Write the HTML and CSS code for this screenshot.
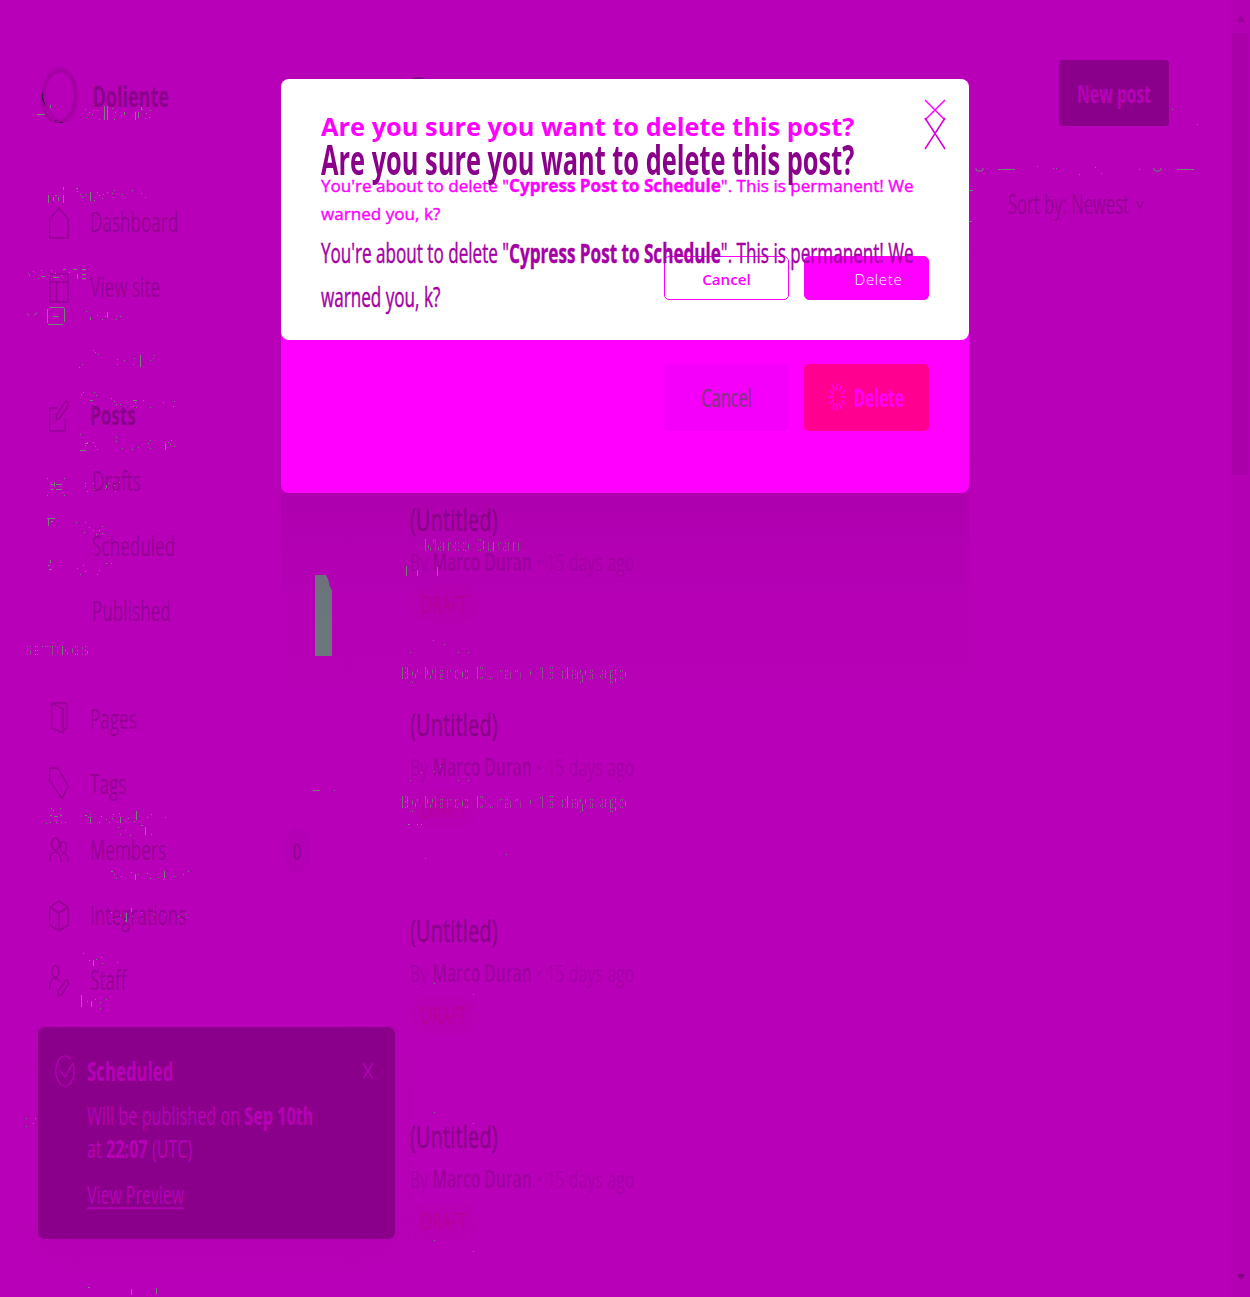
FILE: index.html
```html
<!DOCTYPE html>
<html lang="en">
<head>
<meta charset="utf-8">
<title>Posts - Doliente</title>
<link rel="stylesheet" href="styles.css">
</head>
<body>
<div class="app">
  <aside class="sidebar">
    <header class="brand">
      <svg class="logo" width="40" height="60" viewBox="0 0 40 60" fill="none" stroke="#9f009f"><ellipse cx="19" cy="30.500" rx="16.500" ry="25.500" stroke-width="3.500" opacity=".75" transform="rotate(6 19.500 30)"/><ellipse cx="21" cy="28.500" rx="16" ry="27" stroke-width="3" opacity=".45" transform="rotate(-5 22 29)"/><path d="M2.500 27v8M3.500 33v4M4.500 36v3M15 55h2M19 56.500h4" stroke="#3d1050" stroke-width="1"/></svg>
      <b class="t">Doliente</b>
    </header>
    <nav>
      <a class="item"><svg viewBox="0 0 20 32"><path d="M.7 12 10 1l9.300 11v19H.7z"/></svg><span class="t">Dashboard</span></a>
      <a class="item"><svg viewBox="0 0 20 32"><path d="M1 2h18v28H1zM1 10h18M7.500 10v20"/></svg><span class="t">View site</span></a>
      <div class="group posts">
        <a class="item active"><svg viewBox="0 0 20 32"><path d="M9 8H2Q.7 8 .7 10v19q0 2 1.300 2h13q1.300 0 1.300-2V19M7.500 20v-5L16 2q2-2 3 1 .5 2-.5 4L10 19z"/></svg><span class="t">Posts</span></a>
        <a class="item sub"><span class="t">Drafts</span></a>
        <a class="item sub"><span class="t">Scheduled</span></a>
        <a class="item sub"><span class="t">Published</span></a>
      </div>
      <div class="group pages">
        <a class="item up"><svg viewBox="0 0 20 32"><path d="M2.700 1v25L14 31V7zh13q2 0 2 2v22q0 2-2.500 2.500M2.700 1h13.300q2 0 2 2v22q0 2-3 2.500"/></svg><span class="t">Pages</span></a>
        <a class="item up"><svg viewBox="0 0 20 32"><path d="M.7 3q0-2 1.300-2h5q2 0 3 2l9.300 16L13 31.300.7 14z"/></svg><span class="t">Tags</span></a>
        <a class="item"><svg viewBox="0 0 20 32"><ellipse cx="6.500" cy="9" rx="3.700" ry="6"/><path d="M.7 27q0-10 5.500-10T12 27"/><ellipse cx="14.500" cy="12" rx="3" ry="5.500"/><path d="M13 19q6-2 6.500 8"/></svg><span class="t">Members</span></a>
        <a class="item"><svg viewBox="0 0 20 32"><path d="M10 1l9.300 6v18L10 31 .7 25V7zM.7 7 10 13l9.300-6M10 13v18"/></svg><span class="t">Integrations</span></a>
        <a class="item"><svg viewBox="0 0 20 32"><ellipse cx="6.500" cy="6.500" rx="3.500" ry="5.800"/><path d="M.7 24q0-10 5.500-11 3 0 4.500 4M9.500 25l7.500-10q2-1 2.500 2v2L12 30.500l-2.500 1z"/></svg><span class="t">Staff</span></a>
      </div>
    </nav>
    <span class="count"><span class="t">0</span></span>
  </aside>

  <main>
    <header class="top"><h1><span class="t">Posts</span></h1><button class="new"><b class="t">New post</b></button></header>
    <div class="filters"><span class="t">Sort by: Newest</span><svg width="8" height="10" viewBox="0 0 8 10"><path d="M.5 1 4 8l3.500-7" fill="none" stroke="#8f008f" stroke-width="1.300"/></svg></div>
    <section class="list">
      <article></article>
      <article><h3><span class="t">(Untitled)</span></h3><p><span class="t">By <b>Marco Duran</b> • 15 days ago</span></p><em><span class="t">DRAFT</span></em></article>
      <article><h3><span class="t">(Untitled)</span></h3><p><span class="t">By <b>Marco Duran</b> • 15 days ago</span></p><em><span class="t">DRAFT</span></em></article>
      <article><h3><span class="t">(Untitled)</span></h3><p><span class="t">By <b>Marco Duran</b> • 15 days ago</span></p><em><span class="t">DRAFT</span></em></article>
      <article><h3><span class="t">(Untitled)</span></h3><p><span class="t">By <b>Marco Duran</b> • 15 days ago</span></p><em><span class="t">DRAFT</span></em></article>
    </section>
  </main>
  <div class="scrollbar"><i class="arrow-up"></i><i class="thumb"></i><i class="arrow-down"></i></div>
</div>

<svg class="traces" width="1250" height="1297" viewBox="0 0 1250 1297" fill="none" stroke="#728572">
  <path d="M315 575h11l2 4 1 4 1 4 2 3v66h-17z" fill="#6b7b7b" stroke="none"/>
  <path d="M37 114.500h8M50.500 105v3M104.500 106v14M107.500 106v14M124.500 112v3M135.500 112v8M138.500 112v6M141.500 107v3M48.500 195v8M53.500 197v4M58.500 197v4M63.500 187v3M63.500 195v8M55 195.500h2M90.500 192v9M48 324.500h15M50 307.500h14M47.500 309v14M64.500 308v14M53 316.500h6M27 313.500l2 2M34 315.500l3-3M90.500 317v3M107.500 312v6M82 269.500h4M82 274.500h4M82 278.500h4M73 269.500h4M63 269.500h3M41 276.500h4M53 277.500h6M77.500 274v5"/>
  <path d="M140.500 355v12M80 450.500h6M85 443.500h3M165.500 443v7M90 400.500h3M133 400.500h4M51 484.500h3M56 484.500h6M51 489.500h3M56 489.500h6M54.500 482v5M106.500 485v3M47 518.500h8M48.500 518v8M51 521.500h2M50.500 560v3M48 565.500h2M49 569.500h3M136.500 811v9M120.500 817v6M90.500 817v6M145.500 827v8M164.500 871v7M135.500 874v6M126.500 913v9M131.500 908v4M93.500 960v6M81.500 995v12M91.500 1001v6M50 815.500h2M60 815.500h2M54 816.500h4M313 790.500h7M334 790.500h1M88 1287.500h2M131.500 1289v6M156.500 1288v6"/>
  <path d="M85 109.500h1m3 3h1m3-2h1m-8 7h1m5-3h1m4-4h1m1 9h1m12-11h1m2 4h1m-2 7h1m6-4h1m20-6h1m3 4h1m-2 5h1m4-8h1m-2 7h1M76 188.500h2m-1 3h1m2 3h1m1 3h1m3-3h1m7 6h1m2-8h1m1 3h1m3-1h1m-2 4h1m4-6h1m4 1h1m1-3h1m7 4h1m9-4h1m8 3h1m3 4h1"/>
  <path d="M28 273.500h1m4-2h1m-5 4h1m8 3h1m2-8h1m7 5h1m1-5h1m3 3h1m-2 4h1m6-2h1m7-3h1M86 311.500h1m10 4h1m4 4h1m2-3h1m10 3h1m3-3h1M93 350.500h1m1 2h1m2 2h1m18 5h1m-1 5h1m6-4h1m9-2h1m-2 6h1m16-4h1m3-5h1m-2 3h1M79 367.500h1m2-3h1M81 394.500h1m1-2h1m10 0h1m1 3h1m14 3h1m2 3h1m1 3h1m3 0h1m14-2h1m-3 4h1m2 1h1m6-7h1m6 7h1m12-5h1m10-1h1m-2 5h1"/>
  <path d="M80 434.500h1m4 11h1m1-3h1m5 0h1m1 4h1m1 3h1m18-12h1m-1 4h1m5 7h1m9 1h1m5-2h1m9-4h1m1-3h1m-1 8h1m17-6h1m2-2h1m-2 4h1m3 2h1M47 478.500h1m16 0h1m-18 17h1m16 0h1M85 483.500h1m-1 3h1m1 5h1m5-8h1m0 6h1m10-1h1m2-5h1m5 2h1m0 6h1m3-9h1M76 522.500h1m8 0h1m-2 10h1m4-5h1m3 3h1m2 4h1m2-4h1m2-4h1m-1 7h1M77 568.500h1m2 6h1m2-9h1m1 6h1m11 3h1m1-4h1m6-7h1m4 0h1"/>
  <path d="M51 808.500h1m1 2h1m6-2h1m-15 15h1m3-1h1m5 0h1m4 0h1m3 0h1M85 815.500h2m1 2h1m1-3h1m8 8h1m1-6h1m4 3h1m2 3h1m3-8h1m-2 4h1m4 4h1m1-9h1m5 8h1m2-3h1m5 3h1m12-4h1m3-3h1m13 3h1M118 827.500h1m6 3h1m-6 4h1m9 1h1m10-10h2m8 9h1M111 871.500h2m1 3h1m1 4h1m4-2h1m9-4h1m6 2h1m8-1h1m2 5h1m7-1h1m4 2h1m10-3h1m8-2h1m4-3h1M111 912.500h1m8 3h1m4 5h1m6-4h1m8-4h1m12 2h1m10 0h1m12 2h1m7-2h1M83 953.500h1m5 7h1m6-1h1m4-2h1m0 6h1m14-1h1M87 1001.500h1m7-2h1m4 3h1m5-3h1m-7 9h1M26 1118.500h1m8 0h1m-10 8h1m6-3h1"/>
  <path d="M410 652.500h1m47 0h1m9 0h1m-36-12h1m10 4h1M410 780.500h1m10-8h1m12-1h1m5-5h1m17 14h1m9 0h1M408 824.500h2m7 0h1m3 0h1M425 858.500h1m80-4h1M434 1112.500h1m38 11h1m-40 117h1m38 11h1M434 983.500h1m38 11h1M1172 109.500h1m24 15h1M1037 166.500h1m15 2h1m2 0h1m22 6h1m15-7h1m5 6h1m37-4h1"/>
  <path d="M998 169.500h17M1177 169.500h17M976 168v2l2 1h3l2-1v-2M1154 168v2l2 1h3l2-1v-2M969 190.500h4M969 221.500h3M406.500 566v10M417.500 570v6M437.500 567v9"/>
</svg>
<div class="trace settings">SETTINGS</div>
<div class="trace author">Marco Duran</div>
<div class="trace meta-a">By Marco Duran • 15 days ago</div>
<div class="trace meta-b">By Marco Duran • 15 days ago</div>

<aside class="toast">
  <svg width="20" height="32" viewBox="0 0 20 32" fill="none" stroke="#b800b8" stroke-width="1.200"><path d="M16 4.500Q13 1 10 1C5 1 .7 8 .7 16S5 31 10 31s9.300-7 9.300-15q0-4-1-7M5 15l5 7L18 8"/></svg>
  <div class="toast-body">
    <b class="t toast-title">Scheduled</b>
    <span class="t">Will be published on <b>Sep 10th</b></span>
    <span class="t">at <b>22:07</b> (UTC)</span>
    <a class="t">View Preview</a>
  </div>
  <svg class="toast-close" width="10" height="16" viewBox="0 0 10 16" fill="none" stroke="#b800b8" stroke-width="1.300"><path d="M0 0l10 16M10 0 0 16"/></svg>
</aside>

<div class="modal">
  <div class="sheet">
    <h2>Are you sure you want to delete this post?</h2>
    <p>You're about to delete "<b>Cypress Post to Schedule</b>". This is permanent! We<br>warned you, k?</p>
    <div class="actions"><button>Cancel</button><button class="danger">Delete</button></div>
  </div>
  <div class="dialog">
    <h2><span class="t">Are you sure you want to delete this post?</span></h2>
    <p><span class="t">You're about to delete "<b>Cypress Post to Schedule</b>". This is permanent! We</span><span class="t">warned you, k?</span></p>
    <div class="actions"><button><span class="t">Cancel</span></button><button class="danger"><svg width="18" height="28" viewBox="0 0 18 28" stroke="#f0f" stroke-width="1.300"><path d="M9 0v7M9 21v7M0 14h5M13 14h5M4.500 2l2 6M13.500 2l-2 6M4.500 26l2-6M13.500 26l-2-6M1 7l4 4M17 7l-4 4M1 21l4-4M17 21l-4-4"/></svg><b class="t">Delete</b></button></div>
  </div>
  <svg class="close" width="22" height="52" viewBox="0 0 22 52" fill="none" stroke="#f0f" stroke-width="1.500"><path d="M1 1l20 20M21 1 1 21"/><path d="M1 19l20 31M21 19 1 50" stroke="#d800d8"/></svg>
</div>
</body>
</html>
```
FILE: styles.css
```css
* { box-sizing: border-box; }
body { margin: 0; background: #b800b8; font-family: "Open Sans", "Noto Sans", sans-serif; color: #950095; font-size: 17px; line-height: 24px; overflow: hidden; }
h1, h2, h3, p { margin: 0; font-weight: 400; }
button { font: inherit; border: 0; padding: 0; }
b { font-weight: 700; }
.t { display: inline-block; transform: translateY(-.5px) scaleY(1.6); white-space: nowrap; transform-origin: left center; }

.app { display: grid; grid-template-columns: 350px 881px 19px; height: 1297px; overflow: hidden; }
.sidebar { position: relative; border-right: 1px solid #b500b5; padding: 65px 0 0 40px; }
.brand { display: flex; align-items: center; height: 61px; gap: 12.500px; color: #8a008a; font-size: 18px; }
nav { padding-top: 64.500px; }
.item { display: flex; align-items: center; height: 65.200px; padding-left: 9px; gap: 21px; }
.item .t { letter-spacing: .07px; }
.item svg { width: 20px; height: 32px; fill: none; stroke: #950095; stroke-width: 1.500; }
.item.active { color: #8a008a; font-weight: 700; }
.item.sub { padding-left: 52px; }
.posts { margin-top: 63px; }
.pages { margin-top: 43px; }
.item.up svg { margin-top: -4px; }
.count { position: absolute; left: 283px; top: 828px; width: 28px; height: 45px; border-radius: 50%; background: #b400b4; display: grid; place-items: center; font-size: 15px; font-weight: 600; }

main { padding: 60px 62px 0 60px; }
.top { display: flex; justify-content: space-between; height: 66px; }
h1 { font-size: 30px; font-weight: 600; color: #8a008a; padding-top: 22.500px; }
.new { width: 110px; height: 66px; border-radius: 4px; background: #8a008a; color: #b800b8; font-size: 15.700px; padding-top: 2px; }
.new b { font-weight: 700; }
.filters { display: flex; justify-content: flex-end; align-items: center; gap: 7px; height: 125px; padding: 33px 25px 0 0; font-size: 16.600px; }
article { height: 205.700px; border-top: 1px solid #b400b4; padding-top: 50px; }
h3 { color: #8a008a; font-size: 19.500px; height: 43px; letter-spacing: .35px; -webkit-text-stroke: .3px #8a008a; }
article p { color: #a600a6; font-size: 15.700px; height: 33px; letter-spacing: .16px; }
article p b { color: #9e009e; font-weight: 600; letter-spacing: 0; }
article p .t { transform: translateY(-1px) scaleY(1.55); }
article em { display: flex; align-items: center; justify-content: center; width: 69px; height: 38px; border-radius: 19px; background: #b700b4; color: #b80098; font-size: 15.300px; font-style: normal; margin-top: 1px; }
.scrollbar { background: #b300b3; display: flex; flex-direction: column; align-items: center; padding-top: 15px; }
.arrow-up, .arrow-down { border: 4px solid transparent; border-top: 0; border-bottom: 7px solid #990099; }
.thumb { width: 17px; height: 442px; margin-top: 11px; background: #a900a9; }
.arrow-down { margin-top: 799px; border-bottom: 0; border-top: 7px solid #880088; }

.traces { position: absolute; left: 0; top: 0; }
.trace { position: absolute; color: transparent; white-space: nowrap; font-size: 15.500px; line-height: 20px; background: repeating-linear-gradient(90deg, #6f826f 0 1px, transparent 1px 2px, #6f826f 2px 3px, transparent 3px 5px); background-clip: text; -webkit-background-clip: text; }
.settings { left: 25px; top: 640px; font-size: 13px; letter-spacing: .7px; }
.author { left: 423px; top: 535px; letter-spacing: .3px; }
.meta-a { left: 400px; top: 663px; letter-spacing: .4px; }
.meta-b { left: 400px; top: 792px; letter-spacing: .4px; }

.toast { position: absolute; left: 38px; top: 1027px; width: 357px; height: 212px; border-radius: 7px; background: #8a008a; color: #b800b8; display: flex; padding: 28px 22px 0 17px; gap: 12px; box-shadow: 0 16px 40px rgba(150,0,150,.1); }
.toast-body { flex: 1; display: flex; flex-direction: column; align-items: flex-start; font-size: 15.900px; letter-spacing: .14px; padding-top: 5px; }
.toast-body .t { height: 24px; margin-bottom: 9px; }
.toast-body .toast-title { font-size: 16.600px; font-weight: 700; margin-bottom: 20px; }
.toast-body a { text-decoration: underline; text-underline-offset: 2px; margin-top: 13px; letter-spacing: 0; }
.toast-close { margin-top: 8px; }

.modal { position: absolute; left: 281px; top: 79px; width: 688px; height: 414px; border-radius: 8px; background: #f0f; }
.modal::after { content: ""; position: absolute; left: 0; right: 0; top: 414px; height: 300px; background: linear-gradient(rgba(130,0,130,.18), rgba(130,0,130,.05) 35%, transparent); pointer-events: none; }
.sheet, .dialog { position: absolute; inset: 0; padding: 0 40px; }
.sheet { height: 261px; background: #fff; color: #f0f; border-radius: 8px; padding-top: 29px; }
.modal h2 { font-size: 25.400px; font-weight: 700; line-height: 36px; white-space: nowrap; }
.modal p { font-size: 17.100px; white-space: nowrap; }
.modal p b { font-weight: 700; }
.sheet p { line-height: 28px; padding-top: 28px; -webkit-text-stroke: .4px #f0f; }
.actions { display: flex; justify-content: flex-end; gap: 15px; }
.actions button { width: 125px; height: 44px; border-radius: 5px; }
.sheet .actions { margin-top: 28px; font-size: 15.200px; font-weight: 600; }
.sheet .actions button { background: #fff; color: #f0f; border: 1px solid #f0f; padding-top: 2px; }
.sheet .actions .danger { background: #f0f; color: #fff; font-weight: 300; padding-left: 24px; letter-spacing: .6px; }
.dialog { padding-top: 61px; color: #a500a5; }
.dialog h2 { color: #8a008a; }
.dialog h2 .t { transform: scaleY(1.65); }
.dialog p { padding-top: 56px; -webkit-text-stroke: .3px #a500a5; }
.dialog p .t { display: block; line-height: 44px; }
.dialog .actions { margin-top: 43.500px; font-size: 16.300px; }
.dialog .actions button { height: 67px; background: #f400fa; color: #8c308c; padding-top: 2px; }
.dialog .actions button:first-child { -webkit-text-stroke: .3px #8c308c; }
.dialog .actions .danger { background: #ff0090; color: #f0f; display: flex; align-items: center; justify-content: center; gap: 8px; padding: 0 1px 0 0; }
.dialog .danger b { font-size: 15.500px; padding-top: 1px; }
.close { position: absolute; left: 643px; top: 20px; }
```
